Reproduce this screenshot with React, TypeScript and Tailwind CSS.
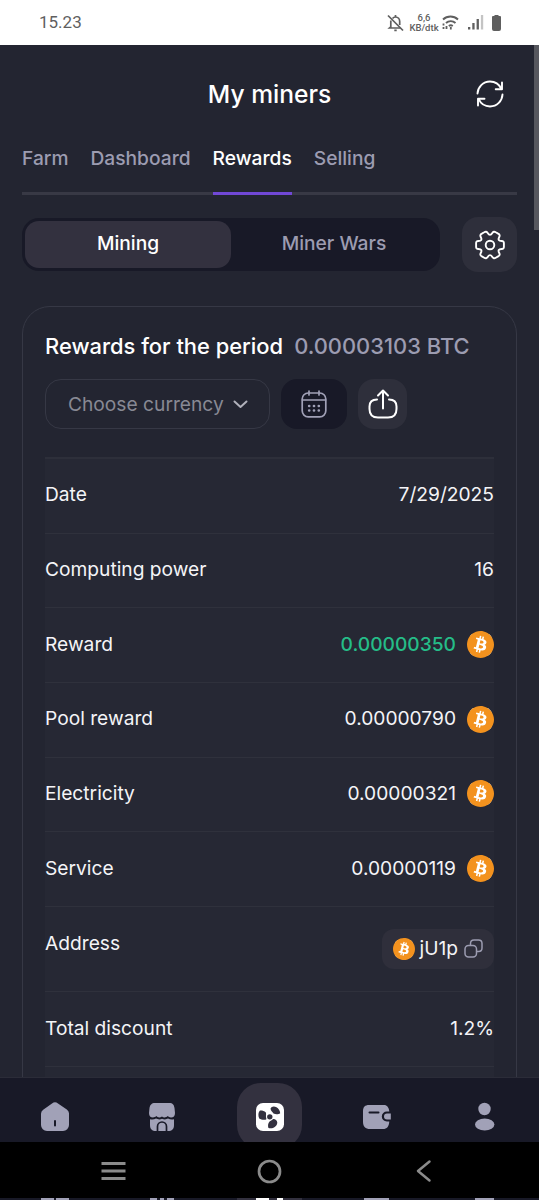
import type { ReactNode } from 'react'
import { SiBitcoin } from 'react-icons/si'

const TABS = ['Farm', 'Dashboard', 'Rewards', 'Selling']

const REWARDS = [
  { label: 'Reward', value: '0.00000350', color: 'font-medium text-[#25bd88]' },
  { label: 'Pool reward', value: '0.00000790', color: 'text-[#f4f4f7]' },
  { label: 'Electricity', value: '0.00000321', color: 'text-[#f4f4f7]' },
  { label: 'Service', value: '0.00000119', color: 'text-[#f4f4f7]' },
]

export default function App() {
  return (
    <div className="flex h-[1200px] w-[539px] flex-col overflow-hidden bg-[#232531] font-['Inter',sans-serif] text-white">
      <StatusBar />

      <div className="relative flex min-h-0 flex-1 flex-col overflow-hidden px-[22px]">
        <div className="absolute top-0 right-0 h-[185px] w-[5px] bg-[#56575e]" />

        {/* Header */}
        <header className="grid h-[98px] shrink-0 grid-cols-[1fr_auto_1fr] items-center">
          <h1 className="col-start-2 text-[24.6px] leading-none font-medium">My miners</h1>
          <button className="mr-[13px] justify-self-end">
            <RefreshIcon />
          </button>
        </header>

        {/* Tabs */}
        <nav className="flex h-[52px] shrink-0 gap-[22px] border-b-[3px] border-[#383945] text-[19.2px] font-medium">
          {TABS.map((tab) => (
            <a
              key={tab}
              className={
                tab === 'Rewards'
                  ? 'h-[52px] border-b-[3px] border-[#7148d6] leading-[30px] text-white'
                  : 'leading-[30px] text-[#9c9cb1]'
              }
            >
              {tab}
            </a>
          ))}
        </nav>

        {/* Mining / Miner Wars switch */}
        <div className="mt-[22px] flex h-[55px] shrink-0 items-center justify-between">
          <div className="flex h-[53px] w-[418px] rounded-[17px] bg-[#181927] p-[3px] text-[19.2px] font-medium">
            <button className="w-[206px] rounded-[14px] bg-[#33313f] pb-0.5">Mining</button>
            <button className="flex-1 pb-0.5 text-[#9c9cb1]">Miner Wars</button>
          </div>
          <button className="flex size-[55px] items-center justify-center rounded-[16px] bg-[#2e2f3b]">
            <GearIcon />
          </button>
        </div>

        {/* Rewards card */}
        <section className="mt-[34px] h-[900px] shrink-0 rounded-t-[28px] border border-[#363845] px-[22px]">
          <div className="mt-[22px] flex h-[34px] items-center gap-[11px] text-[21.9px] font-medium whitespace-nowrap">
            <h2>Rewards for the period</h2>
            <span className="text-[#9c9cb1]">0.00003103 BTC</span>
          </div>

          <div className="mt-4 flex h-[50px] gap-[11px]">
            <button className="flex w-[225px] items-center gap-[9px] rounded-[16px] border border-[#363845] pl-[22px] text-[19.2px] text-[#888994]">
              Choose currency
              <svg width="15" height="10" viewBox="0 0 15 10" fill="none" stroke="#b0b1bb" strokeWidth="2" strokeLinecap="round" strokeLinejoin="round">
                <path d="M1.500 2.500l6 5.500 6-5.500" />
              </svg>
            </button>
            <button className="flex w-[66px] items-center justify-center rounded-[16px] bg-[#181927]">
              <CalendarIcon />
            </button>
            <button className="flex w-[49px] items-center justify-center rounded-[16px] bg-[#2e2f3b]">
              <ShareIcon />
            </button>
          </div>

          <div className="mt-[28px] border-t-2 border-[#2d2f3a] bg-[#262834] text-[19.2px] text-[#f4f4f7]">
            <Row label="Date">7/29/2025</Row>
            <Row label="Computing power">16</Row>
            {REWARDS.map(({ label, value, color }) => (
              <Row key={label} label={label}>
                <span className={color}>{value}</span>
                <Bitcoin className="mt-px size-[27px]" />
              </Row>
            ))}
            <div className="flex h-[85.6px] justify-between border-b border-[#2f313c] pt-[22px]">
              <span className="-mt-px leading-[30px]">Address</span>
              <span className="flex h-10 items-center rounded-[12px] bg-[#2f2f3b] px-[11px]">
                <Bitcoin className="size-[22px]" />
                <span className="ml-[5px]">jU1p</span>
                <CopyIcon />
              </span>
            </div>
            <Row label="Total discount">1.2%</Row>
            <Row label="" />
          </div>
        </section>
      </div>

      <BottomNav />
      <SystemNav />
    </div>
  )
}

function Row({ label, children }: { label: string; children?: ReactNode }) {
  return (
    <div className="flex h-[74.65px] items-center justify-between border-b border-[#2f313c] pb-0.5">
      <span>{label}</span>
      <span className="flex items-center gap-[11px]">{children}</span>
    </div>
  )
}

function Bitcoin({ className }: { className: string }) {
  return (
    <span className={`${className} flex rounded-full bg-[linear-gradient(#fff,#fff)] bg-[length:80%_80%] bg-center bg-no-repeat`}>
      <SiBitcoin className="size-full text-[#f3921e]" />
    </span>
  )
}

function StatusBar() {
  return (
    <div className="flex h-[45px] shrink-0 items-center justify-between bg-white pr-[38px] pl-[39px] font-['Roboto',sans-serif] text-[#5f5f5f]">
      <span className="text-[17px]">15.23</span>
      <div className="flex items-center">
        {/* Muted bell */}
        <svg width="17" height="18" viewBox="0 0 17 18" fill="none" stroke="#5f5f5f" strokeWidth="1.7">
          <path d="M5.5 4.5C6.3 3.5 7.3 3 8.5 3c2.6 0 4.2 2 4.2 4.5V11M3.8 6.5v6.3L2.5 14h11M8.5 3V1M7.3 16.3h2.4" />
          <path d="M1 1.5l15 15" />
        </svg>
        <div className="ml-[5px] w-[30px] text-center text-[9.5px] leading-[10px] font-medium">
          <div>6,6</div>
          <div>KB/dtk</div>
        </div>
        <svg className="ml-[3px]" width="17" height="15" viewBox="0 0 17 15" fill="none" stroke="#5f5f5f" strokeWidth="1.9">
          <path d="M1 4.500a11 11 0 0 1 15 0M4 8a7 7 0 0 1 9.500 0M6.800 11a3.500 3.500 0 0 1 4 0" />
          <path d="M8.800 12v2.500M1.500 8.500v2M1.500 12v2M4.500 11v3" strokeWidth="1.800" />
        </svg>
        <svg className="ml-[9px]" width="16" height="15" viewBox="0 0 16 15" fill="#5f5f5f">
          <path d="M0 12h2.300v2.500H0zM4.300 8h2.300v6.500H4.300zM8.600 4h2.300v10.500H8.600z" />
          <path fill="#c4c4c4" d="M12.900 0h2.300v14.500h-2.300z" />
        </svg>
        <svg className="ml-[8px]" width="9" height="16" viewBox="0 0 9 16" fill="#5f5f5f">
          <path d="M2.500 1V0h4v1H8a1 1 0 0 1 1 1v12a2 2 0 0 1-2 2H2a2 2 0 0 1-2-2V2a1 1 0 0 1 1-1z" />
        </svg>
      </div>
    </div>
  )
}

function BottomNav() {
  return (
    <nav className="flex h-[65px] shrink-0 items-start justify-center overflow-hidden border-t border-[#2b2c38] bg-[#181927] pt-[5px] text-[#a1a1b7]">
      <NavItem>
        <path d="M11 1.400a5 5 0 0 1 6 0l8.800 6.200A5 5 0 0 1 28 12v11a6 6 0 0 1-6 6H6a6 6 0 0 1-6-6V12a5 5 0 0 1 2.200-4.200z" />
        <path d="M14 19v4.500" stroke="#181927" strokeWidth="2" strokeLinecap="round" />
      </NavItem>
      <NavItem>
        <path d="M7 1h14c4 0 5 2 5.500 5l.5 5c0 3-1.500 4.500-4 4.500-1.500 0-2.500-.5-3.300-1.400-1 1-2 1.400-3.200 1.400-1 0-1.800-.3-2.500-1-1 .7-1.700 1-2.700 1-1.200 0-2.300-.5-3-1.400-1 1-2 1.400-3.300 1.400C2.500 15.500 1 14 1 11l.5-5C2 3 3.500 1 7 1z" />
        <path d="M2 17.300c2 .5 4.300.3 6-.7 2 1 4.300 1.100 6 .1 2 1 4.200.9 6-.1 2 1 4 1.200 6 .7V23c0 4-2 6-6 6H8c-4 0-6-2-6-6z" />
        <path d="M9.500 29v-4.500a4.500 4.500 0 0 1 9 0V29" fill="none" stroke="#181927" strokeWidth="1.700" />
      </NavItem>
      <div className="flex w-[107.5px] shrink-0 justify-center">
        <div className="flex h-[66px] w-[65px] justify-center rounded-[24px] bg-[#33313f] pt-[20px]">
          <svg width="28" height="28" viewBox="0 0 28 29" fill="#33313f" preserveAspectRatio="none">
            <rect width="28" height="29" rx="7" fill="#fff" />
            <circle cx="13.800" cy="14.300" r="2.700" />
            <path d="M14.500 6C15.500 3.500 18 3 20.500 4.500c2 1.200 3.500 3.500 3.700 6-1.700 1.500-4.700 1.500-6.700.3C16.800 9.300 14.800 8.700 14.500 6z" />
            <path d="M4 7.700C5.500 7.500 8.500 8 9.700 9.500c.7 1.500.2 3 .3 5 .2 1 .5 1.800.2 2.500-2 .8-5.200.3-7-1-1.300-3-1-6.500.8-8.300z" />
            <path d="M13.800 19c1.400-.6 2.400-1.200 3.200-2.300 2.200-.2 4 1.200 4.300 3.500 0 2.500-1.700 4.500-4.300 5.700-1.700.4-3.700.5-4.700-.2-.5-2.200-.3-5 1.500-6.700z" />
          </svg>
        </div>
      </div>
      <NavItem>
        <path d="M6 3h15c3 0 5 2.500 5.300 6.500h-2.500a5 5 0 0 0 0 10h2.500C26 24.500 24 27 20 27H7c-4.500 0-7-2.500-7-7V9c0-4 2-6 6-6z" />
        <path d="M6.500 10.500h9" stroke="#181927" strokeWidth="2" strokeLinecap="round" />
        <path d="M24 11.500h3.800v6H24a3 3 0 0 1 0-6z" />
      </NavItem>
      <NavItem>
        <circle cx="13.500" cy="7" r="6.200" />
        <ellipse cx="13.700" cy="22.500" rx="9.700" ry="6" />
      </NavItem>
    </nav>
  )
}

function NavItem({ children }: { children: ReactNode }) {
  return (
    <div className="flex w-[107.5px] shrink-0 justify-center pt-[19px]">
      <svg width="28" height="30" viewBox="0 0 28 30" fill="currentColor">
        {children}
      </svg>
    </div>
  )
}

function SystemNav() {
  return (
    <div className="shrink-0">
      <div className="flex h-[56px] items-center justify-between bg-black px-[101px] pt-[2px]">
        <svg width="25" height="20" viewBox="0 0 25 20" stroke="#8b8b8b" strokeWidth="3">
          <path d="M.500 2.500h24M.500 10h24M.500 17.500h24" />
        </svg>
        <svg width="25" height="25" viewBox="0 0 25 25" fill="none" stroke="#8b8b8b" strokeWidth="2.700">
          <circle cx="12.500" cy="12.500" r="10.500" />
        </svg>
        <svg width="25" height="24" viewBox="0 0 25 24" fill="none" stroke="#8b8b8b" strokeWidth="2.500" strokeLinecap="round" strokeLinejoin="round">
          <path d="M16.500 2.500L5 12l11.500 9.500" />
        </svg>
      </div>
      {/* Sliver of the app below the system bar */}
      <svg className="block" width="539" height="2" viewBox="0 0 539 2">
        <path fill="#181927" d="M0 0h539v2H0z" />
        <path fill="#33313f" d="M237 0h65v2h-65z" />
        <path fill="#a1a1b7" d="M41 0h13v2H41zM56 0h13v2H56zM150 0h7v2h-7zM160 0h4v2h-4zM167 0h7v2h-7zM364 0h25v2h-25zM475 0h19v2h-19z" />
        <path fill="#fff" d="M256 0h13v2h-13zM277 0h6v2h-6z" />
      </svg>
    </div>
  )
}

function RefreshIcon() {
  return (
    <svg width="28" height="28" viewBox="0 0 28 28" fill="none" stroke="white" strokeWidth="1.900" strokeLinecap="round" strokeLinejoin="round">
      <path d="M1.500 13.500C1.800 7 7 1.500 14 1.500c5 0 9.300 3 11.300 7.300" />
      <path d="M26 2.500V9.300h-6.300" />
      <path d="M26.500 14.500C26.200 21 21 26.500 14 26.500c-5 0-9.300-3-11.300-7.300" />
      <path d="M8.500 18.700H2v6.800" />
    </svg>
  )
}

function GearIcon() {
  return (
    <svg width="32" height="32" viewBox="-16 -16 32 32" fill="none" stroke="white" strokeWidth="1.900" strokeLinejoin="round">
      <path d="M13.900 1.400Q14.100 3.900 11.600 4Q7.100 4.100 9.260 8.050Q10.430 10.260 8.160 11.340L5.740 12.740Q3.670 14.160 2.340 12.050Q0 8.200-2.340 12.050Q-3.670 14.160-5.740 12.740L-8.160 11.340Q-10.430 10.260-9.260 8.050Q-7.100 4.100-11.600 4Q-14.100 3.900-13.900 1.400V-1.400Q-14.100-3.900-11.600-4Q-7.100-4.100-9.260-8.050Q-10.430-10.260-8.160-11.340L-5.740-12.740Q-3.670-14.160-2.340-12.050Q0-8.200 2.340-12.050Q3.670-14.160 5.740-12.740L8.160-11.340Q10.430-10.260 9.260-8.050Q7.100-4.100 11.600-4Q14.100-3.900 13.900-1.400Z" />
      <circle r="4.300" />
    </svg>
  )
}

function CalendarIcon() {
  return (
    <svg width="26" height="28" viewBox="0 0 26 28" fill="none" stroke="#a1a1b7" strokeWidth="1.700" strokeLinecap="round">
      <rect x="1.200" y="3" width="23.600" height="23.800" rx="6" />
      <path d="M1.500 10h23M8 1v4M18 1v4" />
      <path d="M8.200 16h.01M13 16h.01M17.800 16h.01M8.200 20.500h.01M13 20.500h.01M17.800 20.500h.01" strokeWidth="2.700" />
    </svg>
  )
}

function ShareIcon() {
  return (
    <svg width="30" height="30" viewBox="0 0 30 30" fill="none" stroke="white" strokeWidth="2" strokeLinecap="round" strokeLinejoin="round">
      <path d="M9 10.500C4 10.500 1.500 13 1.500 17.500v2.500c0 5.500 3 8.500 8.500 8.500h10c5.500 0 8.500-3 8.500-8.500v-2.500c0-4.500-2.500-7-7.500-7" />
      <path d="M15 19.500V1.500M10 6.500l5-5 5 5" />
    </svg>
  )
}

function CopyIcon() {
  return (
    <svg className="ml-[6px]" width="19" height="19" viewBox="0 0 19 19" fill="none" stroke="#9c9cb1" strokeWidth="1.500">
      <rect x="1" y="6.500" width="11.500" height="11.500" rx="3.500" />
      <path d="M6.500 6.300V4.500C6.500 2.200 7.700 1 10 1h4.500C16.800 1 18 2.200 18 4.500V9c0 2.300-1.200 3.500-3.500 3.500h-1.800" />
    </svg>
  )
}
